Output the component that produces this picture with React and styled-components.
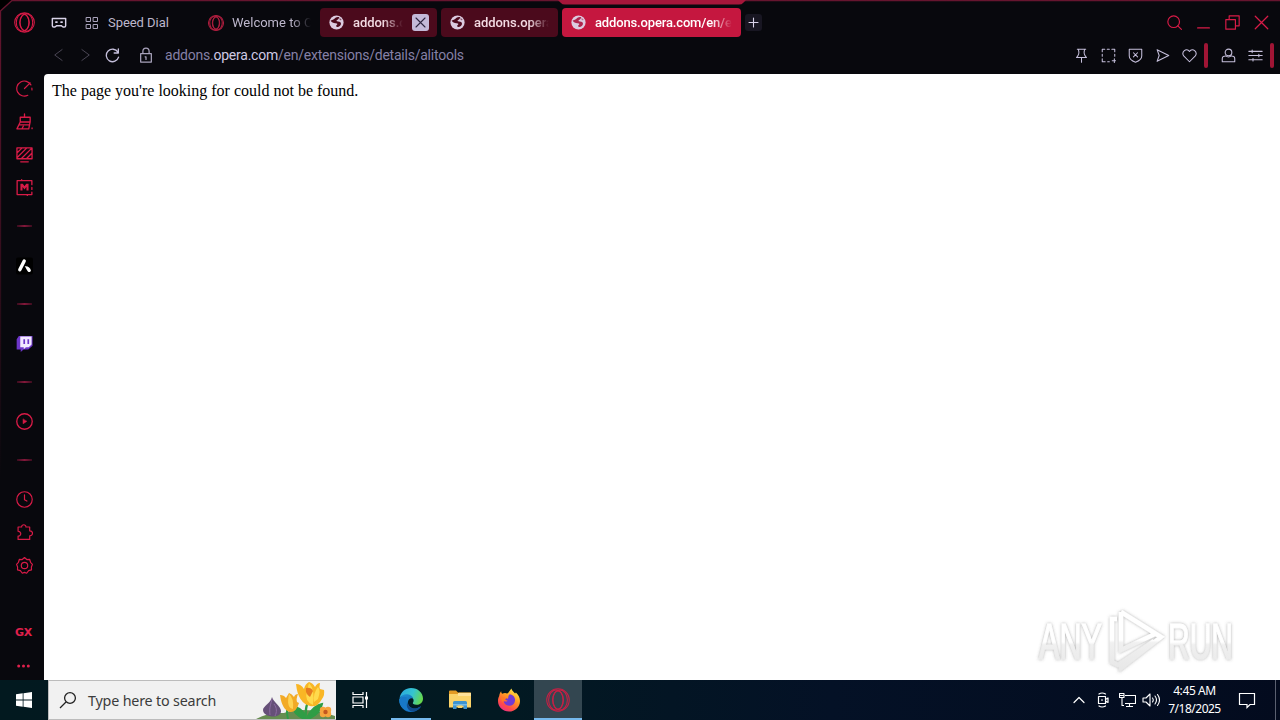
import React from 'react';
import styled, { createGlobalStyle } from 'styled-components';

const Global = createGlobalStyle`
  * { box-sizing: border-box; }
  body { margin: 0; background: #08080d; overflow: hidden; }
`;

const Screen = styled.div`
  position: relative;
  width: 1280px;
  height: 720px;
  display: flex;
  flex-direction: column;
  background: #08080d;
  font-family: Roboto, "Liberation Sans", sans-serif;
  overflow: hidden;
`;

const Frame = styled.svg`
  position: absolute;
  left: 0;
  top: 0;
  pointer-events: none;
`;

const TabStrip = styled.div`
  height: 37px;
  padding-top: 8px;
  display: flex;
  align-items: center;
`;

const Slot = styled.div`
  width: ${(p) => p.$w}px;
  height: ${(p) => (p.$h ? p.$h + 'px' : 'auto')};
  padding-left: ${(p) => p.$pl || 0}px;
  margin-right: ${(p) => p.$mr || 0}px;
  display: flex;
  align-items: center;
  justify-content: center;
  flex: none;
  svg { display: block; }
`;

const Tab = styled.div`
  width: ${(p) => p.$w}px;
  height: 29px;
  margin-right: 4px;
  padding: 0 ${(p) => p.$pr ?? 9}px 0 ${(p) => p.$pad ?? 9}px;
  display: flex;
  align-items: center;
  flex: none;
  border-radius: 4px;
  background: ${(p) => p.$bg || 'transparent'};
  color: ${(p) => p.$color || '#f3dbe3'};
  svg { flex: none; display: block; }
`;

const TabTitle = styled.span`
  flex: 1;
  min-width: 0;
  margin-left: ${(p) => p.$gap ?? 9}px;
  font-size: 13px;
  line-height: 20px;
  letter-spacing: ${(p) => p.$ls ?? -0.05}px;
  font-weight: ${(p) => p.$weight || 400};
  white-space: nowrap;
  overflow: hidden;
  mask-image: ${(p) => (p.$fade ? 'linear-gradient(to right, #000 calc(100% - 20px), transparent)' : 'none')};
`;

const CloseBox = styled.div`
  width: 17px;
  height: 17px;
  margin: 0 -1px 0 9px;
  border-radius: 3px;
  background: #c3b9d8;
  display: grid;
  place-items: center;
`;

const NewTab = styled.div`
  width: 17px;
  height: 17px;
  border-radius: 3px;
  background: #181622;
  display: grid;
  place-items: center;
`;

const Spacer = styled.div`
  flex: 1;
`;

const WindowControls = styled.div`
  display: flex;
  margin-right: 4px;
`;

const AddressBar = styled.div`
  height: 37px;
  padding: 0 0 1px 46px;
  display: flex;
  align-items: center;
`;

const Url = styled.div`
  margin-left: 5px;
  font-size: 14px;
  line-height: 20px;
  letter-spacing: -0.23px;
  color: #8580a6;
  white-space: nowrap;
  b { font-weight: 400; color: #cfc9e4; }
`;

const RedBar = styled.div`
  width: 4px;
  height: 25px;
  margin: 0 ${(p) => p.$right}px 0 ${(p) => p.$left}px;
  border-radius: 2px;
  background: #a01535;
`;

const Body = styled.div`
  height: 606px;
  display: flex;
`;

const Sidebar = styled.nav`
  width: 44px;
  padding-left: 5px;
  display: flex;
  flex-direction: column;
`;

const Divider = styled.div`
  width: 15px;
  height: 2px;
  background: linear-gradient(to right, #3b0c1e, #82183a, #3b0c1e);
`;

const GxLabel = styled.span`
  font: 700 11px/12px "DejaVu Sans", sans-serif;
  color: #e0204c;
  letter-spacing: -0.2px;
  margin-right: 2px;
`;

const Page = styled.main`
  flex: 1;
  background: #fff;
  border-top-left-radius: 4px;
  padding: 8px;
  font: 16px/18px "Liberation Serif", serif;
  color: #000;
`;

const Watermark = styled.svg`
  position: absolute;
  left: 1030px;
  top: 601px;
`;

const Taskbar = styled.footer`
  height: 40px;
  display: flex;
  align-items: stretch;
  background: linear-gradient(to right, #02191f 0, #021922 40%, #041126 65%, #030b1e 100%);
  font-family: "Noto Sans", sans-serif;
`;

const SearchBox = styled.div`
  width: 288px;
  background: #f1f1f1;
  border: 1px solid #bcbcbc;
  border-right: 0;
  display: flex;
  align-items: center;
  svg { display: block; flex: none; }
`;

const SearchText = styled.span`
  flex: 1;
  margin-left: 10px;
  padding-top: 1px;
  font-size: 14.3px;
  line-height: 20px;
  letter-spacing: -0.18px;
  color: #3c3c3c;
  white-space: nowrap;
`;

const TaskButton = styled.div`
  width: 48px;
  margin-right: ${(p) => p.$mr || 0}px;
  display: flex;
  align-items: center;
  justify-content: center;
  background: ${(p) => (p.$active ? '#334650' : 'transparent')};
  box-shadow: ${(p) => (p.$active ? 'inset 0 -2px #76b9ed' : 'none')};
`;

const RunningButton = styled(TaskButton)`
  background: linear-gradient(#76b9ed, #76b9ed) center bottom / 40px 2px no-repeat;
`;

const Clock = styled.div`
  width: 63px;
  margin-right: 1px;
  text-align: center;
  color: #fff;
  font-size: 12px;
  line-height: 18px;
  padding-top: 2px;
  white-space: nowrap;
  div:first-child { letter-spacing: -0.4px; }
  div:last-child { letter-spacing: -0.5px; }
`;

const DesktopEdge = styled.div`
  width: 5px;
  border-left: 1px solid #5a6070;
`;

const RED = '#d81b47';

function Icon({ w = 17, vb = 18, color = RED, sw = 1.25, children }) {
  return (
    <svg width={w} height={w} viewBox={`0 0 ${vb} ${vb}`} fill="none" stroke={color} strokeWidth={sw} strokeLinecap="round" strokeLinejoin="round">
      {children}
    </svg>
  );
}

const OperaLogo = ({ size = 22, color = RED, sw = 1.1 }) => (
  <svg width={size} height={size} viewBox="0 0 22 22" fill="none" stroke={color} strokeWidth={sw}>
    <circle cx="11" cy="11" r="10.3" />
    <ellipse cx="9.2" cy="11" rx="6.8" ry="9.3" />
    <ellipse cx="12.8" cy="11" rx="6.8" ry="9.3" />
    <ellipse cx="11" cy="11" rx="4.6" ry="8.3" />
  </svg>
);

const Globe = ({ land = '#4b0a1c' }) => (
  <svg width="15" height="15" viewBox="0 0 15 15">
    <circle cx="7.5" cy="7.5" r="7.1" fill="#dccbe0" />
    <path d="M1.6 5.6C2.6 7.6 4.6 8.4 6.8 8.3c1.6 0 2 1 .9 1.8-.9.700-.7 1.700.3 1.900 2 .2 3.900-1.400 4-3.300 0-1.600-1.300-2.300-3-2.300-1.600 0-2-.8-.9-1.500 1.200-.7 2-1.400 2.200-2.700C8 1.400 6.600 2.500 5.700 3.400 4.600 4.500 3 4.700 1.600 5.600Z" fill={land} />
    <path d="M10.5 3c.9.300 1.700 1 2.200 1.900l-1.600.3c-.6-.5-.8-1.400-.6-2.200Z" fill={land} opacity=".6" />
  </svg>
);

const EdgeIcon = () => (
  <svg width="24" height="24" viewBox="0 0 24 24">
    <defs>
      <linearGradient id="eg" x1="0" y1="0.2" x2="1" y2="0.5">
        <stop offset="0" stopColor="#2aa9df" /><stop offset=".55" stopColor="#35c4d0" /><stop offset="1" stopColor="#66d84d" />
      </linearGradient>
      <linearGradient id="eb" x1="0" y1="0" x2=".7" y2="1">
        <stop offset="0" stopColor="#2193d8" /><stop offset="1" stopColor="#0c59a4" />
      </linearGradient>
    </defs>
    <path d="M.5 10C2 3.500 6.500 0 12 0c7 0 12 5 12 10.500 0 4-3 6.300-6.500 6.300-3 0-4-1.200-3.600-2 .9-1.400 1-2.900 0-4.400C11 6.500 3.500 6 .5 10Z" fill="url(#eg)" />
    <path d="M.3 11C1.500 7.600 5 6 8.500 6.300c3 .3 5.200 2 5.700 4.200-3.200-1-5.500 1.500-5.300 4.500.3 4 5.200 6.500 9 5.200 1.500-.5 2.500-1.200 4.200-2C20 22 16 24 12 24 5 24-.6 17.500.3 11Z" fill="url(#eb)" />
    <path d="M8 9.500c-3 5 0 12 5.500 14.300-7 .8-13-5-13.200-12C2 8.500 5 8 8 9.500Z" fill="#1878c8" />
    <path d="M9 14.500c0 4.500 5 7 9 5.700l4.100-2c-3 4.800-8 5.600-10.600 4.800C8 21 7 17 9 14.500Z" fill="#114a8b" />
  </svg>
);

const FolderIcon = () => (
  <svg width="22" height="20" viewBox="0 0 22 20">
    <path d="M0 1.500Q0 .5 1 .5h6l2 2h12q1 0 1 1V8H0Z" fill="#e39b24" />
    <path d="M0 4h9l1-1.200h12V17.500H0Z" fill="#fbd368" />
    <path d="M9 3h13v3H9Z" fill="#ffe29a" />
    <path d="M4 19v-6.500q0-1.500 1.500-1.500h11q1.500 0 1.500 1.500V19h-3.500v-3.500h-7V19Z" fill="#3e94d0" />
    <path d="M4 14h14v1.500H4Z" fill="#75bbe8" />
    <path d="M9 15.500h4V18H9Z" fill="#fbd368" />
  </svg>
);

const FirefoxIcon = () => (
  <svg width="24" height="24" viewBox="0 0 24 24">
    <defs>
      <linearGradient id="ff" x1=".8" y1="0" x2=".2" y2="1">
        <stop offset="0" stopColor="#fff04a" /><stop offset=".4" stopColor="#ff9a22" /><stop offset=".75" stopColor="#ff4a48" /><stop offset="1" stopColor="#e92b91" />
      </linearGradient>
    </defs>
    <path d="M4.200 3.200c0 1.200.4 2 1 2.600C7 4.800 8.800 4.800 10 5.500 11.500 5 12.500 2.800 14.500.5c.3 2.100 2 3 3.600 5l.8-1.100c2.800 2.400 4.100 5.300 4.100 8.500 0 6-5 10.600-11 10.600S1 19 1 13c0-2 .3-3.300 1.200-5 .2-2 .8-3.500 2-4.800Z" fill="url(#ff)" />
    <path d="M7.500 10.500c1.300-.6 2.500-.2 3.500.3.600-2-.1-3.300 1.800-4.600 3.800.7 5.600 3.300 5.200 6.500-.4 3.300-3 5.100-5.900 5-3.200-.1-5.300-2.400-5.300-4.700 1 .8 2.800.8 4-.3-1.300-.3-2.800-.5-3.300-2.200Z" fill="#713ad4" />
    <path d="M5.200 5.800c-.8 1.300-.8 2.400-.4 3.500 1 .1 3 .1 4 .8 1 1-.8 1.500-1.800 2.300-.5.5-1 1-1 2-1.500-2.500-3-4-.8-8.600Z" fill="#ff7a24" />
  </svg>
);

const Flowers = () => (
  <svg width="80" height="38" viewBox="0 0 80 38">
    <path d="M0 38Q12 31 28 32 48 25 79 35v3Z" fill="#668d50" />
    <path d="M50 38C49 28 50 24 52 22M52 35q5-10 14-12-2 10-14 15ZM49 34Q44 26 37 26q1 8 12 12ZM32 38Q30 30 32 27" fill="#2f9d46" stroke="#2f9d46" strokeWidth="2" />
    <path d="M16 16c1 5 9 9 9 14 0 4-4 5.500-8 5.500s-10-2-10-6.500c0-4 8-7 9-13Z" fill="#665078" />
    <path d="M16 18c-1 5-3 8-2 16M18 23c3 4 3 8 1 12" stroke="#8b6ba0" fill="none" />
    <path d="M24 14q4 0 6 3l3-5q3 1 5 4 1-3 4-3-2 5-1 8l2 1q-3 10-9 9-8-2-10-17Z" fill="#f2aa26" />
    <path d="M33 13q5 4 4 15-7-1-4-15Z" fill="#ffd352" />
    <path d="M40 3q5 0 8 5 1-5 5-7 4 1 6 5 2-4 5-4-1 4 0 6l4 1q1 5-2 9-5 9-12 7-12-3-14-22Z" fill="#f9b625" />
    <path d="M53 2q6 6 4 22-9-4-6-14ZM62 6q3 3 0 12l-4 3q-1-9 4-15Z" fill="#ffda4d" />
    <path d="M50 7q5-1 7 3l-3 6q-5-3-4-9Z" fill="#e67b20" />
    <g fill="#f6a43d"><circle cx="67" cy="29" r="3.200" /><circle cx="72" cy="29" r="3.200" /><circle cx="67" cy="33" r="3.200" /><circle cx="72" cy="33" r="3.200" /></g>
    <circle cx="69.5" cy="31" r="2.200" fill="#c3571f" />
  </svg>
);

const sideItems = [
  [29, <Icon><path d="M15.800 5.200A8 8 0 1 0 12.500 16.200M9 9l6-6M16.800 8.500l.1 2" /></Icon>],
  [2, null],
  [33, <Icon sw={1.4}><path d="M9 1v3.500M4.500 4.500h10.500v5H4.500ZM4.500 9.500L1 16.800H13.500L15 9.500M3 12.500h11M6.500 16.500l1.200-2.500M17 15.800v.8" /></Icon>],
  [33, <Icon sw={1.4}><path d="M1 2h16v11.500H1ZM5 16.800h8M1 7.500l5.500-5.500M1 12.500L11.500 2M5.500 13.500L16.500 2.500M11 13.500l6-6" /></Icon>],
  [33, <Icon sw={1.4}><path d="M16.800 6V1.800H1.200V16.500h15.600V14M6 .7v1M12 16.500v1M16.800 9v2" /><path d="M5.800 12.300V6.200h.8L9 9.300l2.400-3.100h.8v6.100" strokeWidth="2.200" strokeLinejoin="miter" strokeLinecap="butt" /></Icon>],
  [44, <Divider />],
  [36, <svg width="17" height="18" viewBox="0 0 18 18"><rect width="18" height="18" rx="2" fill="#000" /><path d="M8.700 3.800L4 13" stroke="#fff" strokeWidth="3.600" strokeLinecap="round" /><path d="M9.300 9.300c3-.6 6 1.500 6.500 4.500-.2 1.700-2.200 2-3.200 1-.9-1-2-3.200-3.300-5.500Z" fill="#fff" /></svg>],
  [40, <Divider />],
  [38, <svg width="17" height="18" viewBox="0 0 18 18"><path d="M3 1.500h14.500v10.500L13 16H8l-3 2.500V16H.7V5Z" fill="#6d36c9" /><path d="M4.500 2h12v8.500l-3 3h-3l-2.300 2.200v-2.200H4.500Z" fill="#f2e8ff" /><path d="M8.700 5v5M13 5v5" stroke="#6d36c9" strokeWidth="1.800" /></svg>],
  [40, <Divider />],
  [39, <Icon sw={1.4}><circle cx="9" cy="9" r="8.200" /><path d="M7.500 6.600v4.800L11.200 9Z" fill={RED} strokeWidth=".6" /></Icon>],
  [38, <Divider />],
  [4, null],
  [33, <Icon><circle cx="9" cy="9" r="8.200" /><path d="M9 4v5.300l2.500 1.400" /></Icon>],
  [33, <Icon><path d="M2.200 3.200H6c-.4-3.200 4.800-3.200 4.500 0h4v4c4 0 4 5.300 0 5.300v3.800H2.200v-3.500C6 12.800 6 8.200 2.200 7.700Z" /></Icon>],
  [33, <Icon><path d="M9 .6l2.400 2.100 3.100-.1.900 3 2 2.200-1.100 2.700.1 3.200-3 .8L11.300 17.200 9 16.300l-2.300.9-2.100-2.700-3-.8.100-3.200L.6 7.800l2-2.200.9-3 3.100.1Z" /><circle cx="9" cy="9" r="3.400" /></Icon>],
  [34, null],
  [33, <GxLabel>GX</GxLabel>],
  [33, <svg width="15" height="4" viewBox="0 0 15 4" fill="#e0204c"><circle cx="1.700" cy="2" r="1.500" /><circle cx="6.500" cy="2" r="1.500" /><circle cx="11.300" cy="2" r="1.500" /></svg>],
];

const LIGHT = '#c5bfdb';
const actions = [
  <path d="M4 1.500h10M5.500 1.500v1.500q1.500 4-2.500 8.500h12q-4-4.500-2.500-8.500V1.500M9 11.500v5.500" />,
  <path d="M1.500 4.500v-3h3M7.500 1.500h2.500M13 1.500h3.500v3M1.500 7.500v2.500M1.500 13v3.500h3.500M8 16.500h2M16.500 7.500v2.500M16 13v4.500M13.500 15.300h4" />,
  <path d="M1.500 1.500h15v8c0 3.500-3.500 6-7.500 7.500-4-1.500-7.500-4-7.500-7.500ZM6.500 5.700l5 5M11.500 5.700l-5 5" />,
  <path d="M2.500 2L16.500 9 2.500 16 5 9Z" />,
  <path d="M9 16.500L2.300 9.800C-1.500 5 5.300-1.200 9 4.200c3.700-5.400 10.500.8 6.700 5.600Z" />,
];

export default function App() {
  return (
    <Screen>
      <Global />
      <TabStrip>
        <Slot $w={49}><OperaLogo size={21} /></Slot>
        <Slot $w={20}>
          <Icon w={16} color="#d8d2e8" sw={1.6}><path d="M1.500 4h15v8q0 1.500-1.500 1.500h-1.500L11.500 12h-5L4.500 13.500H3Q1.500 13.500 1.500 12Z" /><path d="M5.500 8h1.200M11.300 8h1.200" strokeWidth="2" /></Icon>
        </Slot>
        <Tab $w={120} $pad={16} $color="#bdb7cc">
          <Icon w={13} vb={13} color="#aaa4bd" sw={1}><path d="M1.500 1.500h4v4h-4ZM8.500 1.500h4v4h-4ZM1.500 8.500h4v4h-4ZM8.500 8.500h4v4h-4Z" /></Icon>
          <TabTitle $gap={10}>Speed Dial</TabTitle>
        </Tab>
        <Tab $w={123} $pad={15} $pr={5} $color="#bdb7cc">
          <OperaLogo size={16} sw={1.5} color="#a91d3d" />
          <TabTitle $gap={8} $ls={0} $fade>Welcome to O</TabTitle>
        </Tab>
        <Tab $w={117} $bg="#4b0a1c">
          <Globe /><TabTitle $fade $weight={500}>addons.o</TabTitle>
          <CloseBox><Icon w={11} vb={11} color="#2c2540" sw={1.1}><path d="M1 1l9 9M10 1L1 10" /></Icon></CloseBox>
        </Tab>
        <Tab $w={117} $bg="#4b0a1c"><Globe /><TabTitle $fade $weight={500}>addons.opera</TabTitle></Tab>
        <Tab $w={179} $bg="#c5173f" $color="#fff"><Globe land="#b0264e" /><TabTitle $fade $ls={-0.15} $weight={500}>addons.opera.com/en/e</TabTitle></Tab>
        <NewTab><Icon w={11} vb={11} color="#d8d2e8" sw={1.1}><path d="M5.500 1v9M1 5.500h9" /></Icon></NewTab>
        <Spacer />
        <WindowControls>
          <Slot $w={29}><Icon w={15} sw={1.4}><circle cx="8" cy="8" r="7" /><path d="M13 13l4.300 4.300" /></Icon></Slot>
          <Slot $w={29}><Icon w={15}><path d="M2 15.500h14" strokeWidth="1.600" /></Icon></Slot>
          <Slot $w={29}><Icon w={15} sw={1.4}><path d="M1 5.500h11.500V17H1ZM5 5.300V1h12v12h-4.300" /></Icon></Slot>
          <Slot $w={29}><Icon w={15} sw={1.5}><path d="M1.500 1.500l15 15M16.500 1.500L1.500 16.500" /></Icon></Slot>
        </WindowControls>
      </TabStrip>
      <AddressBar>
        <Slot $w={26}><Icon w={14} color="#4b4756"><path d="M13 2L3.500 9l9.500 7" /></Icon></Slot>
        <Slot $w={26}><Icon w={14} color="#4b4756"><path d="M5 2l9.500 7L5 16" /></Icon></Slot>
        <Slot $w={29}><Icon w={15} color={LIGHT} sw={1.6}><path d="M15.500 5A7.500 7.500 0 1 0 16.300 11M16 1v5h-5" /></Icon></Slot>
        <Slot $w={33} $pl={4}><Icon w={16} color="#a8a2bb" sw={1.4}><path d="M3 7.500h12V17H3ZM5.500 7.500V5c0-5 7-5 7 0v2.500M9 11v3M8 11h1" /></Icon></Slot>
        <Url>addons.<b>opera.com</b>/en/extensions/details/alitools</Url>
        <Spacer />
        {actions.map((a, i) => <Slot key={i} $w={27}><Icon w={15} color={LIGHT}>{a}</Icon></Slot>)}
        <RedBar $left={1} $right={7} />
        <Slot $w={27}><Icon w={15} color={LIGHT} sw={1.3}><circle cx="9" cy="5.300" r="4" /><path d="M5.500 9.500q-4 0-4 3.300V16.500h15v-3.700q0-3.300-4-3.300M5.500 9.500q3.500 2.500 7 0" /></Icon></Slot>
        <Slot $w={27}><Icon w={15} color={LIGHT} sw={1.3}><path d="M1 4h16M1 9h16M1 14h16M5 2.500v3M13 7.500v3M6 12.500v3" /></Icon></Slot>
        <RedBar $left={1} $right={6} />
      </AddressBar>
      <Body>
        <Sidebar>
          {sideItems.map(([h, el], i) => <Slot key={i} $w={39} $h={h}>{el}</Slot>)}
        </Sidebar>
        <Page>The page you're looking for could not be found.</Page>
      </Body>
      <Taskbar>
        <Slot $w={48}><svg width="16" height="16" viewBox="0 0 16 16" fill="#fff"><path d="M0 2.300l6.700-1v6.300H0ZM7.500 1.200L16 0v7.600H7.500ZM0 8.400h6.700v6.300l-6.700-1ZM7.500 8.400H16V16l-8.500-1.200Z" /></svg></Slot>
        <SearchBox>
          <Slot $w={29} $pl={9}><svg width="18" height="18" viewBox="0 0 18 18" fill="none" stroke="#222" strokeWidth="1.300"><circle cx="11" cy="7" r="5.400" /><path d="M7 11L1 17" /></svg></Slot>
          <SearchText>Type here to search</SearchText>
          <Flowers />
        </SearchBox>
        <TaskButton $mr={3}><svg width="17" height="16" viewBox="0 0 17 16" fill="none" stroke="#fff" strokeWidth="1.200"><path d="M1 0v2.500h10V0M1 5h10v6H1ZM1 16v-2.500h10V16M14.500 0v16" /><path d="M13 4.500h3v3h-3Z" fill="#fff" stroke="none" /></svg></TaskButton>
        <RunningButton $mr={1}><EdgeIcon /></RunningButton>
        <TaskButton $mr={1}><FolderIcon /></TaskButton>
        <TaskButton $mr={1}><FirefoxIcon /></TaskButton>
        <TaskButton $active><OperaLogo size={24} color="#c52045" sw={1} /></TaskButton>
        <Spacer />
        <Slot $w={25}><Icon w={12} vb={12} color="#fff" sw={1.2}><path d="M1 8.500l5-5 5 5" /></Icon></Slot>
        <Slot $w={24}><Icon w={16} vb={16} color="#fff" sw={1.2}><path d="M3.500 4.500h7v7h-7ZM10.500 7.500l2.500-1.500v4.500l-2.500-1.500M4 2q3-2 6.500 0M4 14q3 2 6.500 0M7 7.500v1" /></Icon></Slot>
        <Slot $w={24}><Icon w={17} vb={17} color="#fff" sw={1.1}><path d="M6 3.500h10.500v8H6M10.500 11.500v3M7 14.500h7M.5 1.500h4.500v4H.5ZM3 5.500v8h2M1 3.500h4" strokeLinecap="butt" /></Icon></Slot>
        <Slot $w={24}><Icon w={18} vb={18} color="#fff" sw={1.1}><path d="M1 7h3l4-4v12l-4-4H1ZM10.500 7q1.500 2 0 4M13 5q3 4 0 8M15.500 3.500q4 5.500 0 11" /></Icon></Slot>
        <Clock><div>4:45 AM</div><div>7/18/2025</div></Clock>
        <Slot $w={40} $mr={8}><Icon w={18} vb={18} color="#fff" sw={1.2}><path d="M1.500 2.500h15v11h-4.500L9 16.500v-3H1.500Z" strokeLinejoin="miter" /></Icon></Slot>
        <DesktopEdge />
      </Taskbar>
      <Frame width="1280" height="680" viewBox="0 0 1280 680" fill="none">
        <defs>
          <linearGradient id="edge" x1="0" y1="0" x2="0" y2="480" gradientUnits="userSpaceOnUse">
            <stop offset="0" stopColor="#67152f" /><stop offset="1" stopColor="#67152f" stopOpacity="0" />
          </linearGradient>
        </defs>
        <path d="M0 0h12L0 11Z" fill="#000" />
        <path d="M.5 480V11L12 .5H1280" stroke="url(#edge)" strokeWidth="1.300" />
        <path d="M558 0h188l-3 3q-1 1.500-4 1.500H565q-3 0-4-1.500Z" fill="#a5163a" />
      </Frame>
      <Watermark width="220" height="76" viewBox="0 0 220 76">
        <defs>
          <filter id="soft" x="-10%" y="-10%" width="120%" height="130%"><feDropShadow dx="0" dy="0" stdDeviation="1.800" floodColor="#555" floodOpacity=".5" /></filter>
          <linearGradient id="wm" x1="0" y1="0" x2="0" y2="1"><stop offset=".5" stopColor="#fff" /><stop offset=".55" stopColor="#f0f0f0" /><stop offset="1" stopColor="#e8e8e8" /></linearGradient>
        </defs>
        <g filter="url(#soft)">
          <text x="9" y="58" textLength="63" lengthAdjust="spacingAndGlyphs" fontFamily="Liberation Sans, sans-serif" fontSize="50" fill="url(#wm)" stroke="url(#wm)" strokeWidth="1.200">ANY</text>
          <text x="138" y="58" textLength="65" lengthAdjust="spacingAndGlyphs" fontFamily="Liberation Sans, sans-serif" fontSize="50" fill="url(#wm)" stroke="url(#wm)" strokeWidth="1.200">RUN</text>
          <path d="M91 11L131 36 91 67V61M91 11V49L125 33M87 18H82V61L88 64 124 40" fill="none" stroke="url(#wm)" strokeWidth="4.500" />
        </g>
      </Watermark>
    </Screen>
  );
}
